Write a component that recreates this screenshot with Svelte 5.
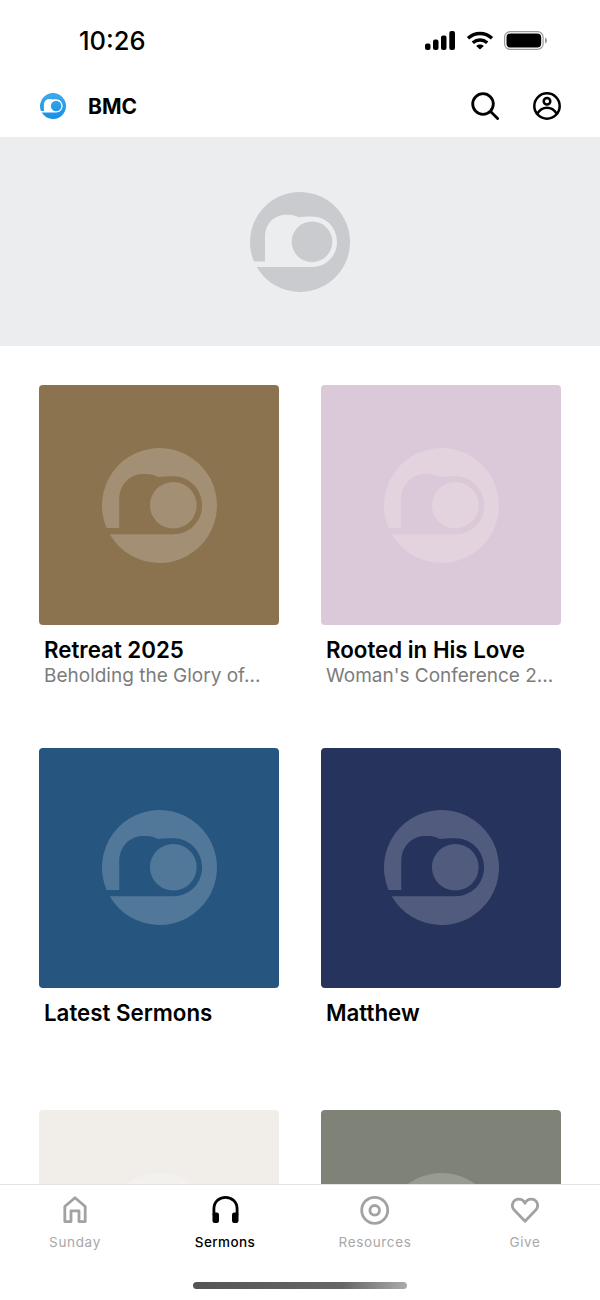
<script>
  const logo = "M3.960 69.500H15V45C15 32 24 22.700 36 22.700C41 22.700 45 23 48.500 25.300C52 24.600 56 24.500 62 24.500C76 24.500 87 35.500 87 50C87 64 76 75 62 75H6.699A50 50 0 1 0 3.960 69.500ZM62 29.500A20.300 20.300 0 1 0 62 70.100A20.300 20.300 0 1 0 62 29.500Z";
  const cards = [
    { title: "Retreat 2025", sub: "Beholding the Glory of...", color: "#8c7350" },
    { title: "Rooted in His Love", sub: "Woman's Conference 2...", color: "#dbc8d8" },
    { title: "Latest Sermons", sub: "", color: "#265680" },
    { title: "Matthew", sub: "", color: "#26335d" },
    { title: "", sub: "", color: "#f1eee9" },
    { title: "", sub: "", color: "#7f8277" }
  ];
</script>

<div class="page">
  <div class="status">
    <span class="time">10:26</span>
    <div class="sys">
      <svg class="signal" viewBox="0 0 30 19" width="30" height="19" fill="#000">
        <rect x="0" y="12.500" width="5.500" height="6.500" rx="2"/>
        <rect x="8" y="8.500" width="5.500" height="10.500" rx="2"/>
        <rect x="16" y="4.500" width="5.500" height="14.500" rx="2"/>
        <rect x="24.300" y="0" width="5.700" height="19" rx="2"/>
      </svg>
      <svg class="wifi" viewBox="0 0 28 19" width="28" height="19" fill="none" stroke="#000" stroke-width="3.400">
        <path d="M2 7.200C9 .9 19 .9 26 7.200"/>
        <path d="M6.800 11.800C11 8.100 17 8.100 21.200 11.800"/>
        <path d="M14 18.600L10.200 14.900C12.400 13 15.600 13 17.800 14.900Z" fill="#000" stroke="none"/>
      </svg>
      <svg class="batt" viewBox="0 0 43 19" width="43" height="19">
        <rect x=".6" y=".6" width="38.500" height="17.800" rx="5.500" fill="none" stroke="#9a9a9a" stroke-width="1.200"/>
        <rect x="2.500" y="2.500" width="34.700" height="14" rx="4" fill="#000"/>
        <path d="M41 6.500C42.300 7 43 8.200 43 9.500C43 10.800 42.300 12 41 12.500Z" fill="#9a9a9a"/>
      </svg>
    </div>
  </div>

  <header class="bar">
    <svg class="mark" viewBox="0 0 100 100" width="26" height="26">
      <defs>
        <linearGradient id="bmc" x1="0" y1="0" x2="0" y2="1">
          <stop offset="0" stop-color="#3fa9ec"/>
          <stop offset="1" stop-color="#1690e6"/>
        </linearGradient>
      </defs>
      <path d={logo} fill="url(#bmc)"/>
    </svg>
    <span class="brand">BMC</span>
    <svg class="search" viewBox="0 0 28 28" width="28" height="28" fill="none" stroke="#000" stroke-width="2.800" stroke-linecap="round">
      <circle cx="12" cy="12" r="10.300"/>
      <path d="M19.800 19.800L26.600 26.600"/>
    </svg>
    <svg class="user" viewBox="0 0 28 28" width="28" height="28" fill="none" stroke="#000" stroke-width="2.500">
      <circle cx="14" cy="14" r="12.700"/>
      <circle cx="14" cy="9.300" r="3.300"/>
      <path d="M4.200 21.700C7 17.500 10.500 15.800 14 15.800C17.500 15.800 21 17.500 23.800 21.700"/>
    </svg>
  </header>

  <div class="hero">
    <svg viewBox="0 0 100 100" width="100" height="100"><path d={logo} fill="#c9cbce"/></svg>
  </div>

  <main class="grid">
    {#each cards as c}
      <article class="card">
        <div class="thumb" style="background:{c.color}">
          <svg viewBox="0 0 100 100" width="115" height="115"><path d={logo} fill="#fff" fill-opacity=".2"/></svg>
        </div>
        {#if c.title}<h2>{c.title}</h2>{/if}
        {#if c.sub}<p>{c.sub}</p>{/if}
      </article>
    {/each}
  </main>

  <nav class="tabs">
    <div class="tab">
      <svg viewBox="0 0 30 30" width="30" height="30" fill="none" stroke="#a2a2a2" stroke-width="2.800" stroke-linejoin="round">
        <path d="M4.800 26.600V11.500L15 2.800L25.200 11.500V26.600H19V15.800H11V26.600Z"/>
      </svg>
      <span>Sunday</span>
    </div>
    <div class="tab active">
      <svg viewBox="0 0 30 30" width="30" height="30" fill="none" stroke="#000" stroke-width="2.800">
        <path d="M3.900 20V14C3.900 7 9 2.400 15.500 2.400C22 2.400 27.100 7 27.100 14V20"/>
        <rect x="2.500" y="17.500" width="6.500" height="10.500" rx="2.200" fill="#000" stroke="none"/>
        <rect x="22" y="17.500" width="6.500" height="10.500" rx="2.200" fill="#000" stroke="none"/>
      </svg>
      <span>Sermons</span>
    </div>
    <div class="tab">
      <svg viewBox="0 0 30 30" width="30" height="30" fill="none" stroke="#a2a2a2" stroke-width="2.800">
        <circle cx="14.700" cy="15.300" r="13"/>
        <circle cx="14.700" cy="15.300" r="4.800"/>
      </svg>
      <span>Resources</span>
    </div>
    <div class="tab">
      <svg viewBox="0 0 30 30" width="30" height="30" fill="none" stroke="#a2a2a2" stroke-width="2.800" stroke-linejoin="round">
        <path d="M15 26.200L4 14.800C.6 10.800 2.800 4.100 8.800 4.100C11.500 4.100 13.800 5.600 15 8.300C16.200 5.600 18.500 4.100 21.200 4.100C27.200 4.100 29.400 10.800 26 14.800Z"/>
      </svg>
      <span>Give</span>
    </div>
    <div class="home"></div>
  </nav>
</div>

<style>
  :global(body) { margin: 0; background: #fff; }
  .page {
    position: relative;
    width: 600px;
    height: 1300px;
    overflow: hidden;
    background: #fff;
    font-family: Inter, "Liberation Sans", sans-serif;
    color: #000;
  }
  .status {
    display: flex;
    align-items: center;
    justify-content: space-between;
    height: 75px;
    padding: 0 53px 0 79px;
    box-sizing: border-box;
  }
  .time { font-size: 25.500px; font-weight: 500; line-height: 1; margin-top: 7px; }
  .sys { display: flex; align-items: center; gap: 11px; margin-top: 6px; }
  .sys svg { display: block; }
  .batt { margin-left: -1px; }
  .bar {
    display: flex;
    align-items: center;
    height: 62px;
    padding: 0 39px 0 40px;
    box-sizing: border-box;
  }
  .brand { font-size: 21px; font-weight: 700; margin-left: 22px; flex: 1; }
  .user { margin-left: 34px; }
  .hero {
    display: flex;
    align-items: center;
    justify-content: center;
    height: 209px;
    background: #ecedef;
  }
  .grid {
    display: grid;
    grid-template-columns: 240px 240px;
    column-gap: 42px;
    grid-auto-rows: 362.500px;
    padding: 39px 39px 0;
  }
  .thumb {
    display: flex;
    align-items: center;
    justify-content: center;
    width: 240px;
    height: 240px;
    border-radius: 4px;
  }
  h2 {
    margin: 11px 0 0 5px;
    font-size: 22.300px;
    font-weight: 600;
    line-height: 27px;
  }
  p {
    margin: 0 0 0 5px;
    font-size: 19px;
    line-height: 25px;
    color: #7c7c7c;
    white-space: nowrap;
  }
  .tabs {
    position: absolute;
    left: 0;
    right: 0;
    bottom: 0;
    height: 116px;
    display: grid;
    grid-template-columns: repeat(4, 150px);
    align-items: start;
    background: #fff;
    border-top: 1px solid #e3e3e3;
    box-sizing: border-box;
  }
  .tab {
    display: flex;
    flex-direction: column;
    align-items: center;
    padding-top: 10px;
    color: #a8a8a8;
    font-size: 13.500px;
    font-weight: 400;
    letter-spacing: .65px;
  }
  .tab svg { display: block; }
  .tab span { margin-top: 9px; line-height: 17px; }
  .tab.active { color: #000; font-weight: 500; letter-spacing: .4px; }
  .home {
    position: absolute;
    left: 193px;
    top: 97px;
    width: 214px;
    height: 7px;
    border-radius: 4px;
    background: linear-gradient(90deg, #555 0%, #666 70%, #aaa 100%);
  }
</style>
